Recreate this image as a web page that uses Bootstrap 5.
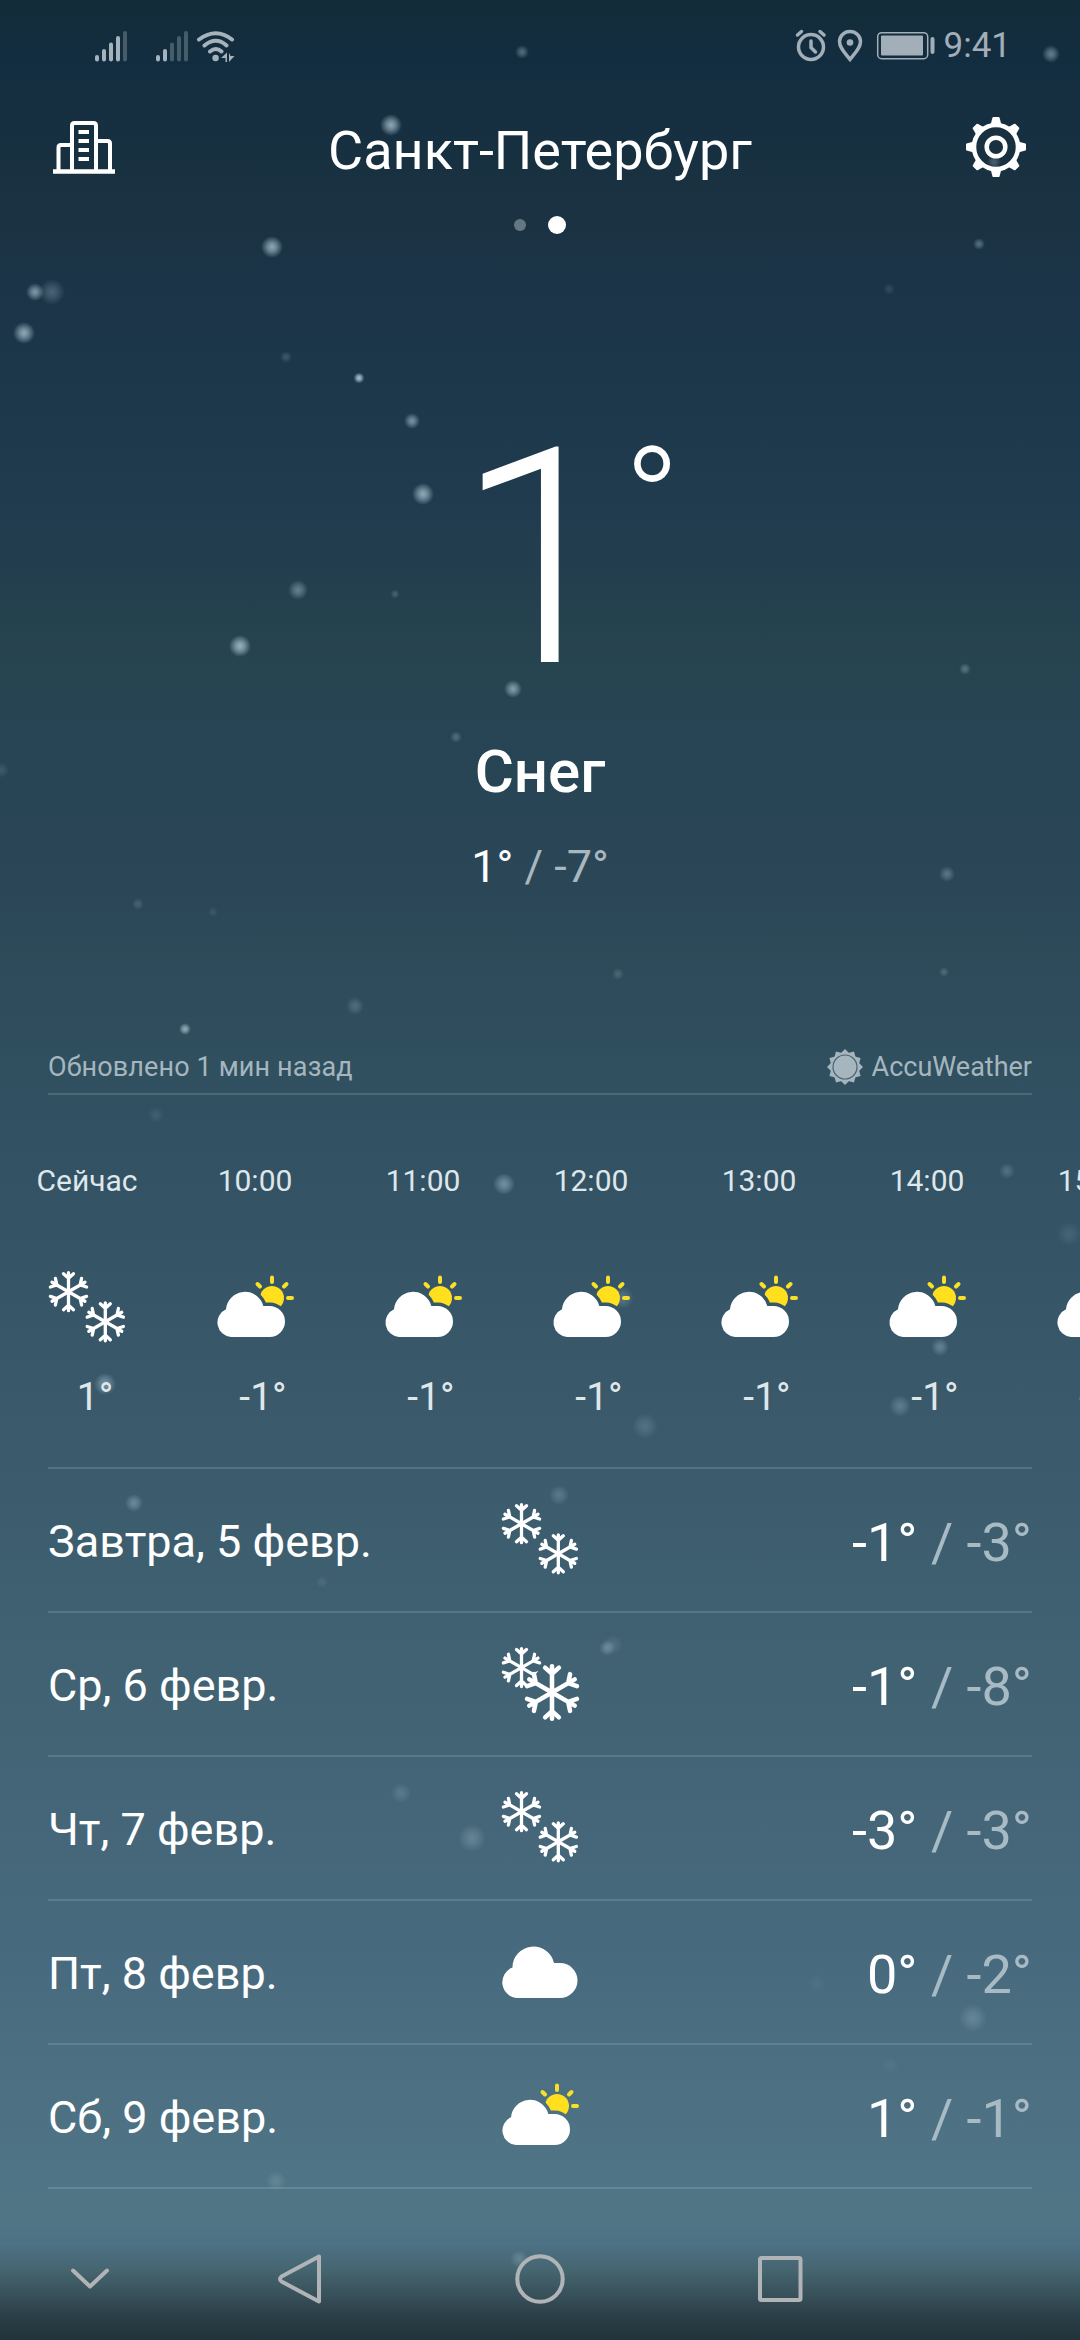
<!DOCTYPE html>
<html lang="ru">
<head>
<meta charset="utf-8">
<meta name="viewport" content="width=device-width, initial-scale=1">
<title>Погода — Санкт-Петербург</title>
<link href="https://cdn.jsdelivr.net/npm/bootstrap@5.3.0/dist/css/bootstrap.min.css" rel="stylesheet">
<style>
  body { font-family: Roboto, "Noto Sans", sans-serif; background: #22333a; color: #fff; }
  .screen {
    height: 2340px;
    background: linear-gradient(180deg, #132c39 0, #132d40 60px, #1a3241 205px, #1b3448 290px, #203b4e 500px, #26434f 650px, #274454 720px, #2b4757 880px, #2f4d5c 1020px, #315162 1110px, #38586a 1350px, #406171 1640px, #486a7e 1960px, #4f7485 2170px, #507686 2218px, #4d7185 2245px, #45656f 2270px, #364e58 2298px, #2a3f48 2316px, #22333a 2340px);
  }
  .snowfall { inset: 0; }
  .status-bar { height: 92px; padding: 0 69px 0 94px; color: #a2aeb8; font-size: 35px; }
  .top-bar { height: 112px; padding: 0 52px; }
  .city { font-size: 54px; line-height: 70px; padding-top: 5px; }
  .pager { height: 42px; gap: 21.5px; }
  .pager i { width: 12px; height: 12px; border-radius: 50%; background: #647884; }
  .pager i.on { width: 18px; height: 18px; background: #fff; }
  .now { padding-top: 163px; }
  .temp-now { font-size: 302px; line-height: 300px; font-weight: 300; }
  .temp-now sup { top: 15px; left: 623.5px; font-size: 151px; line-height: 158px; }
  .condition { font-size: 60px; line-height: 76px; font-weight: 500; margin-top: 25px; }
  .range { font-size: 45px; line-height: 60px; margin-top: 27px; }
  .low { color: #a9b7bf; }
  .source { margin: 143px 48px 0; height: 55px; padding-top: 1px; border-bottom: 2px solid #4c6875; color: #a5b6bf; font-size: 27px; }
  .updated { letter-spacing: .13px; }
  .hours { padding: 66px 0 45px 3px; }
  .hour { flex: 0 0 168px; color: #dfe7eb; }
  .hour time { font-size: 30px; line-height: 40px; }
  .hour svg { margin: 69px 0 26px; }
  .hour .deg { font-size: 39px; line-height: 50px; padding-left: 16px; }
  .wx { width: 80px; height: 76px; display: block; }
  .days { margin: 0 48px; border-top: 2px solid rgba(190, 220, 230, .18); }
  .day { height: 144px; border-bottom: 2px solid rgba(190, 220, 230, .18); }
  .day .label { font-size: 45px; padding-top: 4px; }
  .day .hl { font-size: 54px; padding-top: 4px; }
  .day .low { color: #a8bbc5; }
  .navkeys { margin-top: 41px; height: 98px; }
</style>
<script src="https://cdn.jsdelivr.net/npm/bootstrap@5.3.0/dist/js/bootstrap.bundle.min.js"></script>
</head>
<body class="m-0">
<svg width="0" height="0" class="position-absolute">
  <defs>
    <radialGradient id="glow"><stop offset="0" stop-color="#b4d0dc"/><stop offset=".4" stop-color="#b4d0dc" stop-opacity=".7"/><stop offset="1" stop-color="#b4d0dc" stop-opacity="0"/></radialGradient>
    <g id="arm"><path d="M0 0V-19M0 -13.5L-5 -18M0 -13.5L5 -18"/></g>
    <g id="flake" fill="none" stroke="#fff" stroke-width="3.3" stroke-linecap="round">
      <use href="#arm"/><use href="#arm" transform="rotate(60)"/><use href="#arm" transform="rotate(120)"/><use href="#arm" transform="rotate(180)"/><use href="#arm" transform="rotate(240)"/><use href="#arm" transform="rotate(300)"/>
    </g>
    <mask id="flakeGap" maskUnits="userSpaceOnUse" x="-5" y="-5" width="90" height="90"><rect x="-5" y="-5" width="90" height="90" fill="#fff"/><path d="M50 15L77 31V62L50 78L23 62V46L30 43.5L24 36V31L33 29L38 23L44 28Z" fill="#000"/></mask>
    <path id="smallCloud" d="M14 67A14.5 14.5 0 0 1 9 39.3A19 19 0 0 1 46.3 36H52.5A15.5 15.5 0 0 1 52.5 67Z"/>
    <mask id="cloudGap" maskUnits="userSpaceOnUse" x="0" y="0" width="80" height="76"><rect width="80" height="76" fill="#fff"/><use href="#smallCloud" fill="#000" stroke="#000" stroke-width="7"/></mask>
    <symbol id="snow" viewBox="-2 0 80 76"><use href="#flake" x="19.5" y="21.7"/><use href="#flake" x="56.3" y="51.8"/></symbol>
    <symbol id="snowHeavy" viewBox="-2 0 80 76"><g mask="url(#flakeGap)"><use href="#flake" x="19.5" y="21.6"/></g><use href="#flake" transform="translate(50 46.5) scale(1.38)"/></symbol>
    <symbol id="cloudy" viewBox="-2 0 80 76"><path fill="#fff" d="M15.5 64A15.7 15.7 0 0 1 10.5 33.6A21 21 0 0 1 52 29H58A17.5 17.5 0 0 1 58 64Z"/></symbol>
    <symbol id="partly" viewBox="-2 0 80 76">
      <use href="#smallCloud" fill="#fff"/>
      <circle cx="55" cy="28" r="12" fill="#ffdf1e" mask="url(#cloudGap)"/>
      <path d="M55 7.500V12M71 28H75M40.500 14L43 16.500M69.500 14L67 16.500" fill="none" stroke="#f8df2a" stroke-width="4" stroke-linecap="round"/>
    </symbol>
  </defs>
</svg>

<div class="screen position-relative overflow-hidden d-flex flex-column">
  <svg class="snowfall position-absolute w-100 h-100" viewBox="0 0 1080 2340" fill="url(#glow)">
    <circle cx="522" cy="52" r="7" opacity=".4"/><circle cx="1051" cy="54" r="9" opacity=".5"/>
    <circle cx="391" cy="125" r="11" opacity=".75"/><circle cx="272" cy="247" r="11" opacity=".75"/>
    <circle cx="979" cy="244" r="6" opacity=".4"/><circle cx="889" cy="289" r="6" opacity=".15"/>
    <circle cx="35" cy="292" r="9" opacity=".65"/><circle cx="52" cy="292" r="13" opacity=".3"/>
    <circle cx="24" cy="333" r="11" opacity=".75"/><circle cx="286" cy="357" r="6" opacity=".22"/>
    <circle cx="359" cy="378" r="5.500" opacity=".95"/><circle cx="412" cy="421" r="8" opacity=".6"/>
    <circle cx="423" cy="494" r="11" opacity=".75"/><circle cx="298" cy="590" r="10" opacity=".45"/>
    <circle cx="395" cy="594" r="4.500" opacity=".25"/><circle cx="240" cy="646" r="11" opacity=".8"/>
    <circle cx="513" cy="689" r="9" opacity=".65"/><circle cx="456" cy="737" r="6" opacity=".3"/>
    <circle cx="965" cy="669" r="6" opacity=".35"/><circle cx="1" cy="770" r="8" opacity=".15"/>
    <circle cx="947" cy="874" r="8" opacity=".35"/><circle cx="138" cy="904" r="6" opacity=".2"/>
    <circle cx="213" cy="912" r="5" opacity=".12"/><circle cx="944" cy="972" r="5" opacity=".25"/>
    <circle cx="618" cy="974" r="6" opacity=".22"/><circle cx="355" cy="1006" r="9" opacity=".25"/>
    <circle cx="185" cy="1029" r="6" opacity=".75"/><circle cx="156" cy="1115" r="8" opacity=".12"/>
    <circle cx="504" cy="1184" r="11" opacity=".5"/><circle cx="1007" cy="1171" r="8" opacity=".25"/>
    <circle cx="1069" cy="1234" r="12" opacity=".13"/><circle cx="623" cy="1298" r="11" opacity=".25"/>
    <circle cx="940" cy="1347" r="9" opacity=".35"/><circle cx="105" cy="1384" r="11" opacity=".5"/>
    <circle cx="900" cy="1406" r="11" opacity=".3"/><circle cx="645" cy="1426" r="13" opacity=".2"/>
    <circle cx="559" cy="1495" r="10" opacity=".25"/><circle cx="134" cy="1503" r="9" opacity=".4"/>
    <circle cx="322" cy="1582" r="6" opacity=".12"/><circle cx="607" cy="1648" r="8" opacity=".35"/>
    <circle cx="613" cy="1645" r="10" opacity=".15"/><circle cx="401" cy="1793" r="10" opacity=".2"/>
    <circle cx="472" cy="1838" r="14" opacity=".28"/><circle cx="973" cy="2018" r="14" opacity=".25"/>
    <circle cx="817" cy="1983" r="9" opacity=".06"/><circle cx="890" cy="2065" r="9" opacity=".06"/>
    <circle cx="276" cy="2181" r="10" opacity=".2"/><circle cx="519" cy="2259" r="9" opacity=".25"/>
    <circle cx="994" cy="162" r="9" opacity=".3"/>
  </svg>

  <div class="status-bar position-relative d-flex align-items-center justify-content-between">
    <svg width="142" height="32" viewBox="94 29 142 32" fill="none" stroke="#a5b3bd" stroke-width="4" stroke-linecap="round">
      <path d="M97 56v2.500M104 50v8.500M111 43.500v15M118 37v21.500M158 56v2.500M165 50v8.500"/>
      <path stroke="#455c6a" d="M125 32v26.500M172 43.500v15M179 37v21.500M186 32v26.500"/>
      <path d="M199 38.500Q216 26 232 38.500M204.500 44.500Q216 35 226.500 44.500M210 50.500Q216 45.500 221.500 50.500"/>
      <circle cx="215.600" cy="57" r="3.200" fill="#a5b3bd" stroke="none"/>
      <path d="M221 57l6-5.500v9.500h-1.500v-4zM229 51.500v9.500l5.500-6h-4z" fill="#a5b3bd" stroke="none"/>
    </svg>
    <div class="d-flex align-items-center">
      <svg width="142" height="34" viewBox="794 29 142 34" fill="none" stroke="#a2aeb8" stroke-width="3.500" stroke-linecap="round">
        <circle cx="811" cy="47" r="12.500"/><path d="M811 41v6.500l4.500 4.500M797.500 35l4-3.500M824 35l-4-3.500"/>
        <path d="M850 59.500C845 53 839.500 48 839.500 41.500a10.500 10 0 0 1 21 0C860.500 48 855 53 850 59.500Z"/><circle cx="850" cy="42.500" r="3.300" fill="#a2aeb8" stroke="none"/>
        <rect x="877.700" y="32.700" width="50" height="26" rx="4" stroke-width="1.500"/><rect x="881" y="35.500" width="42" height="20" rx="1" fill="#a2aeb8" stroke="none"/><path d="M932.500 39v13" stroke-width="4"/>
      </svg>
      <span class="ps-2">9:41</span>
    </div>
  </div>

  <div class="top-bar position-relative d-flex align-items-center justify-content-between">
    <svg width="64" height="56" viewBox="52 120 64 56" fill="none" stroke="#fff" stroke-width="4">
      <path d="M53 171.500H115" stroke-width="4.500"/><path d="M72 171V125.500q0-2.500 2.500-2.500H93.500q2.500 0 2.500 2.500V171M58.500 171V147.500q0-2.500 2.500-2.500H72M96 141h11.500q2.500 0 2.500 2.500V171"/>
      <path d="M78.500 132h10.500M78.500 141h10.500M78.500 150h10.500M78.500 159h10.500"/>
    </svg>
    <h1 class="city m-0 fw-normal">Санкт-Петербург</h1>
    <svg width="64" height="64" viewBox="-32 -31 64 64">
      <g fill="#fff"><g id="teeth"><path id="tooth" d="M-5.500 -22L-3.500 -29.500Q-3.200 -30 -2.500 -30H2.500Q3.200 -30 3.500 -29.500L5.500 -22Z"/><use href="#tooth" transform="rotate(90)"/><use href="#tooth" transform="rotate(180)"/><use href="#tooth" transform="rotate(270)"/></g><use href="#teeth" transform="rotate(45)"/></g>
      <circle r="22" fill="#193040" stroke="#fff" stroke-width="4.500"/><circle cx="-2" cy="15" r="7" fill="url(#glow)" opacity=".3"/><circle r="9.300" fill="none" stroke="#fff" stroke-width="4.500"/>
    </svg>
  </div>
  <div class="pager d-flex align-items-center justify-content-center position-relative"><i></i><i class="on"></i></div>

  <section class="now position-relative text-center">
    <div class="temp-now position-relative">1<sup class="position-absolute">°</sup></div>
    <div class="condition">Снег</div>
    <div class="range">1° <span class="low">/ -7°</span></div>
  </section>

  <div class="source position-relative d-flex align-items-center justify-content-between">
    <span class="updated">Обновлено 1 мин назад</span>
    <span class="d-flex align-items-center">
      <svg class="me-2" width="38" height="38" viewBox="-19 -19 38 38" fill="#a5b6bf">
        <g id="r4"><path id="ray" d="M-5 -13L0 -18L5 -13Z"/><use href="#ray" transform="rotate(90)"/><use href="#ray" transform="rotate(180)"/><use href="#ray" transform="rotate(270)"/></g>
        <use href="#r4" transform="rotate(30)"/><use href="#r4" transform="rotate(60)"/><circle r="14.500"/><circle r="12" fill="none" stroke="#4b6472" stroke-width="1.200"/>
      </svg>AccuWeather</span>
  </div>

  <section class="hours position-relative d-flex overflow-hidden">
    <div class="hour d-flex flex-column align-items-center"><time>Сейчас</time><svg class="wx"><use href="#snow"/></svg><span class="deg">1°</span></div>
    <div class="hour d-flex flex-column align-items-center"><time>10:00</time><svg class="wx"><use href="#partly"/></svg><span class="deg">-1°</span></div>
    <div class="hour d-flex flex-column align-items-center"><time>11:00</time><svg class="wx"><use href="#partly"/></svg><span class="deg">-1°</span></div>
    <div class="hour d-flex flex-column align-items-center"><time>12:00</time><svg class="wx"><use href="#partly"/></svg><span class="deg">-1°</span></div>
    <div class="hour d-flex flex-column align-items-center"><time>13:00</time><svg class="wx"><use href="#partly"/></svg><span class="deg">-1°</span></div>
    <div class="hour d-flex flex-column align-items-center"><time>14:00</time><svg class="wx"><use href="#partly"/></svg><span class="deg">-1°</span></div>
    <div class="hour d-flex flex-column align-items-center"><time>15:00</time><svg class="wx"><use href="#partly"/></svg><span class="deg">-1°</span></div>
  </section>

  <section class="days position-relative">
    <div class="day row g-0 align-items-center"><div class="col label">Завтра, 5 февр.</div><div class="col-auto"><svg class="wx"><use href="#snow"/></svg></div><div class="col hl text-end">-1° <span class="low">/ -3°</span></div></div>
    <div class="day row g-0 align-items-center"><div class="col label">Ср, 6 февр.</div><div class="col-auto"><svg class="wx"><use href="#snowHeavy"/></svg></div><div class="col hl text-end">-1° <span class="low">/ -8°</span></div></div>
    <div class="day row g-0 align-items-center"><div class="col label">Чт, 7 февр.</div><div class="col-auto"><svg class="wx"><use href="#snow"/></svg></div><div class="col hl text-end">-3° <span class="low">/ -3°</span></div></div>
    <div class="day row g-0 align-items-center"><div class="col label">Пт, 8 февр.</div><div class="col-auto"><svg class="wx"><use href="#cloudy"/></svg></div><div class="col hl text-end">0° <span class="low">/ -2°</span></div></div>
    <div class="day row g-0 align-items-center"><div class="col label">Сб, 9 февр.</div><div class="col-auto"><svg class="wx"><use href="#partly"/></svg></div><div class="col hl text-end">1° <span class="low">/ -1°</span></div></div>
  </section>

  <nav class="navkeys position-relative">
    <svg class="d-block w-100 h-100" viewBox="0 2230 1080 98" fill="none" stroke="#b0b4b6" stroke-width="4" stroke-linecap="round" stroke-linejoin="round">
      <path d="M73 2270.500L90 2286.500L107 2270.500"/><path d="M319 2256.500V2301.500L281.500 2281.500Q278.500 2279 281.500 2276.500Z"/><circle cx="540" cy="2279" r="22.700"/><rect x="760" y="2258" width="40.500" height="42" rx="1.500"/>
    </svg>
  </nav>
</div>
</body>
</html>
